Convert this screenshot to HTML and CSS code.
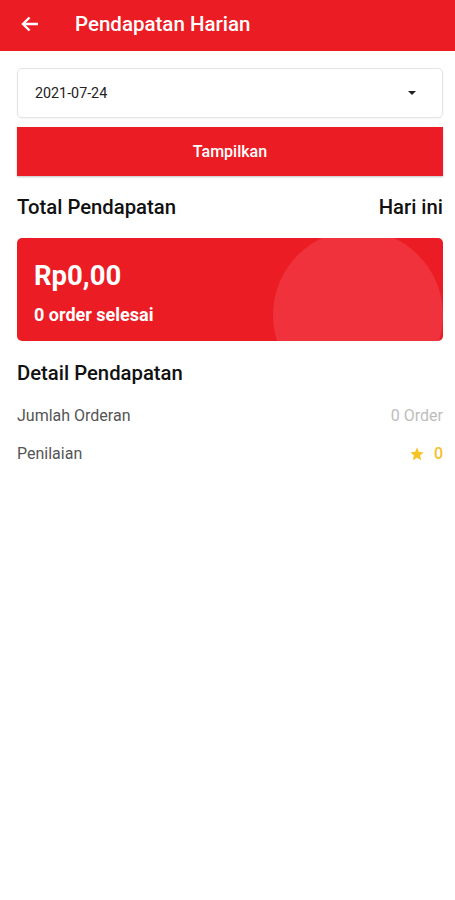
FILE: index.html
```html
<!DOCTYPE html>
<html lang="id">
<head>
    <meta charset="UTF-8">
    <meta name="viewport" content="width=device-width, initial-scale=1.0">
    <title>Pendapatan Harian</title>
    <link rel="stylesheet" href="styles.css">
</head>
<body>

<div class="toolbar">
    <svg class="back" width="18" height="16" viewBox="0 0 18 16">
        <path d="M17 8H2.5M8.5 1.5L2 8l6.5 6.5" fill="none" stroke="#fff" stroke-width="2.4"/>
    </svg>
    <h1>Pendapatan Harian</h1>
</div>

<div class="content">
    <div class="select">
        <span>2021-07-24</span>
        <span class="caret"></span>
    </div>
    <button class="show-button">Tampilkan</button>

    <div class="row title-row">
        <h2>Total Pendapatan</h2>
        <h2>Hari ini</h2>
    </div>

    <div class="card">
        <div class="bubble"></div>
        <div class="amount">Rp0,00</div>
        <div class="orders">0 order selesai</div>
    </div>

    <h2 class="detail-title">Detail Pendapatan</h2>
    <div class="row detail">
        <span>Jumlah Orderan</span>
        <span class="muted">0 Order</span>
    </div>
    <div class="row detail">
        <span>Penilaian</span>
        <span class="rating">
            <svg width="16" height="16" viewBox="0 0 24 24">
                <path d="M12 2l2.9 6.9 7.1.6-5.4 4.7 1.6 7.1L12 17.5 5.8 21.3l1.6-7.1L2 9.5l7.1-.6z" fill="#f5c324"/>
            </svg>
            0
        </span>
    </div>
</div>

</body>
</html>
```

FILE: styles.css
```css
body {
    font-family: Roboto, "Noto Sans", Arial, sans-serif;
    background-color: #fff;
    margin: 0;
    color: #1a1a1a;
}
.toolbar {
    height: 51px;
    background: #ec1c24;
    display: flex;
    align-items: center;
    padding-left: 21px;
    box-sizing: border-box;
}
.back {
    margin-top: -4px;
}
.toolbar h1 {
    margin: 0 0 4px 36px;
    color: #fff;
    font-size: 20.5px;
    font-weight: 500;
}
.content {
    padding: 17px 12px 0 17px;
}
.select {
    height: 50px;
    border: 1px solid #e4e4e4;
    border-radius: 5px;
    box-sizing: border-box;
    display: flex;
    align-items: center;
    justify-content: space-between;
    padding: 0 26px 0 17px;
    font-size: 14.3px;
    color: #222;
    box-shadow: 0 1px 2px rgba(0, 0, 0, 0.05);
}
.caret {
    width: 0;
    height: 0;
    border-left: 4px solid transparent;
    border-right: 4px solid transparent;
    border-top: 4px solid #222;
}
.show-button {
    display: block;
    width: 100%;
    height: 49px;
    margin-top: 9px;
    background: #ec1c24;
    color: #fff;
    border: none;
    font-family: inherit;
    font-size: 16px;
    font-weight: 500;
    box-shadow: 0 1px 2px rgba(0, 0, 0, 0.25);
}
.row {
    display: flex;
    justify-content: space-between;
    align-items: center;
}
h2 {
    margin: 0;
    font-size: 20.3px;
    font-weight: 500;
    color: #111;
}
.title-row {
    margin-top: 19px;
}
.card {
    position: relative;
    overflow: hidden;
    margin-top: 19px;
    height: 103px;
    background: #ec1c24;
    border-radius: 5px;
    color: #fff;
    padding: 21px 17px 0;
    box-sizing: border-box;
}
.bubble {
    position: absolute;
    left: 256px;
    top: -8px;
    width: 170px;
    height: 170px;
    border-radius: 50%;
    background: #ef323c;
}
.amount, .orders {
    position: relative;
    font-weight: 700;
}
.amount {
    font-size: 27.5px;
}
.orders {
    margin-top: 12px;
    font-size: 18px;
}
.detail-title {
    margin-top: 20px;
}
.detail {
    margin-top: 21px;
    font-size: 16px;
    color: #555;
}
.detail + .detail {
    margin-top: 19px;
}
.muted {
    color: #bdbdbd;
}
.rating {
    display: flex;
    align-items: center;
    gap: 9px;
    color: #f2c230;
    font-weight: 500;
}
```
